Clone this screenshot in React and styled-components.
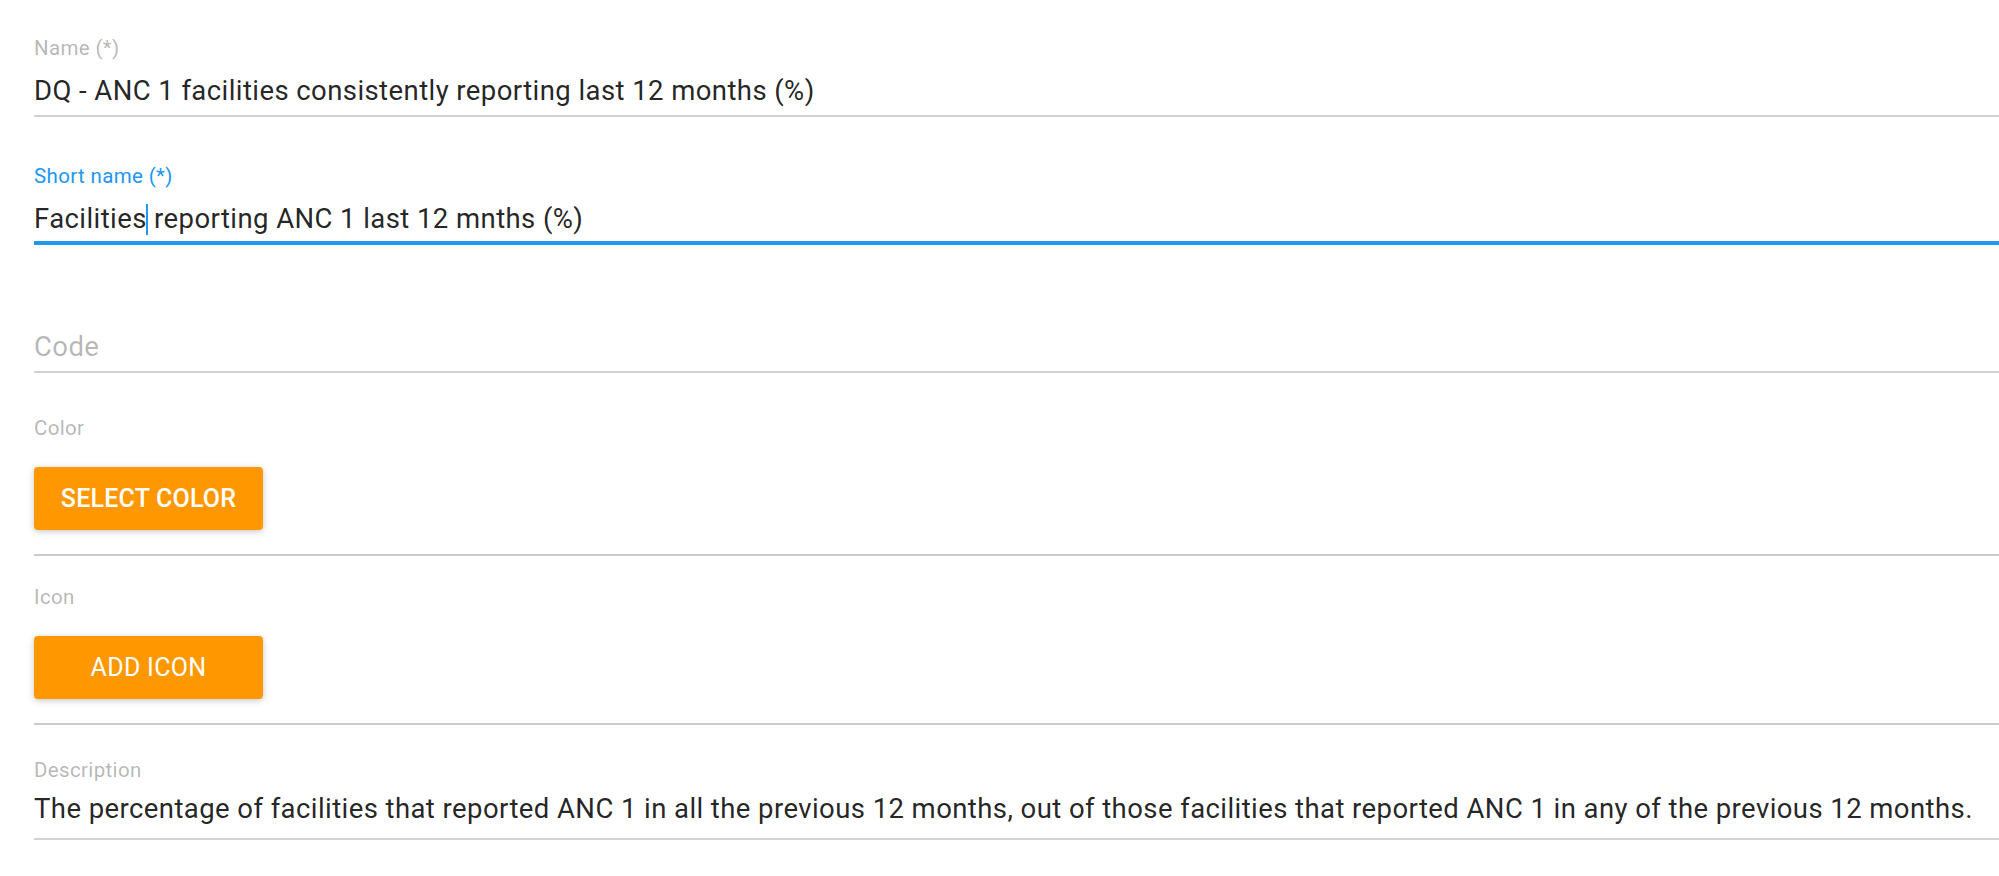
import React from 'react';
import styled, { createGlobalStyle } from 'styled-components';

const GlobalStyle = createGlobalStyle`
  html, body {
    margin: 0;
    padding: 0;
    background: #ffffff;
  }
  body {
    font-family: Roboto, "Liberation Sans", sans-serif;
    -webkit-font-smoothing: antialiased;
  }
`;

const Form = styled.div`
  padding: 36px 0 0 34px;
  overflow: hidden;
`;

const Field = styled.div`
  display: flex;
  flex-direction: column;
  margin-top: ${(p) => p.$top || 0}px;
  padding-bottom: ${(p) => (p.$focused ? 6 : p.$pad || 8)}px;
  border-bottom: ${(p) => (p.$focused ? '4px solid #2196f3' : '2px solid #d2d2d2')};
`;

const Label = styled.label`
  display: block;
  height: 24px;
  font-size: 20.5px;
  line-height: 24px;
  letter-spacing: 0.35px;
  color: ${(p) => (p.$focused ? '#2196f3' : 'rgba(0, 0, 0, 0.3)')};
  white-space: nowrap;
`;

const Value = styled.div`
  margin-top: ${(p) => (p.$gap !== undefined ? p.$gap : 15)}px;
  font-size: 27.5px;
  line-height: 32px;
  height: 32px;
  letter-spacing: 0.42px;
  color: ${(p) => (p.$placeholder ? 'rgba(0, 0, 0, 0.3)' : 'rgba(0, 0, 0, 0.87)')};
  white-space: nowrap;
`;

const Caret = styled.span`
  display: inline-block;
  width: 2px;
  height: 31px;
  margin: 0 -1px 0 -1px;
  vertical-align: -7px;
  background: #2196f3;
`;

const Section = styled.div`
  margin-top: ${(p) => p.$top}px;
  padding-bottom: 24px;
  border-bottom: 2px solid #cbcbcb;
`;

const ActionButton = styled.button`
  display: flex;
  align-items: center;
  justify-content: center;
  margin-top: 27px;
  width: 229px;
  height: 63px;
  padding: 0;
  border: none;
  border-radius: 4px;
  background: #ff9800;
  color: #ffffff;
  font-family: Roboto, "Liberation Sans", sans-serif;
  font-size: 25px;
  font-weight: ${(p) => (p.$bold ? 500 : 400)};
  text-transform: uppercase;
  letter-spacing: ${(p) => (p.$bold ? 0.2 : 0.3)}px;
  box-shadow: 0 2px 8px rgba(0, 0, 0, 0.14), 0 1px 4px rgba(0, 0, 0, 0.1);
  cursor: pointer;
`;

export default function App() {
  return (
    <>
      <GlobalStyle />
      <Form>
        <Field>
          <Label>Name (*)</Label>
          <Value>DQ - ANC 1 facilities consistently reporting last 12 months (%)</Value>
        </Field>

        <Field $top={47} $focused>
          <Label $focused>Short name (*)</Label>
          <Value>
            Facilities<Caret /> reporting ANC 1 last 12 mnths (%)
          </Value>
        </Field>

        <Field $top={47}>
          <Label />
          <Value $placeholder>Code</Value>
        </Field>

        <Section $top={43}>
          <Label>Color</Label>
          <ActionButton $bold>Select color</ActionButton>
        </Section>

        <Section $top={29}>
          <Label>Icon</Label>
          <ActionButton>Add icon</ActionButton>
        </Section>

        <Field $top={33} $pad={13}>
          <Label>Description</Label>
          <Value $gap={11}>
            The percentage of facilities that reported ANC 1 in all the previous 12 months, out of those
            facilities that reported ANC 1 in any of the previous 12 months.
          </Value>
        </Field>
      </Form>
    </>
  );
}
